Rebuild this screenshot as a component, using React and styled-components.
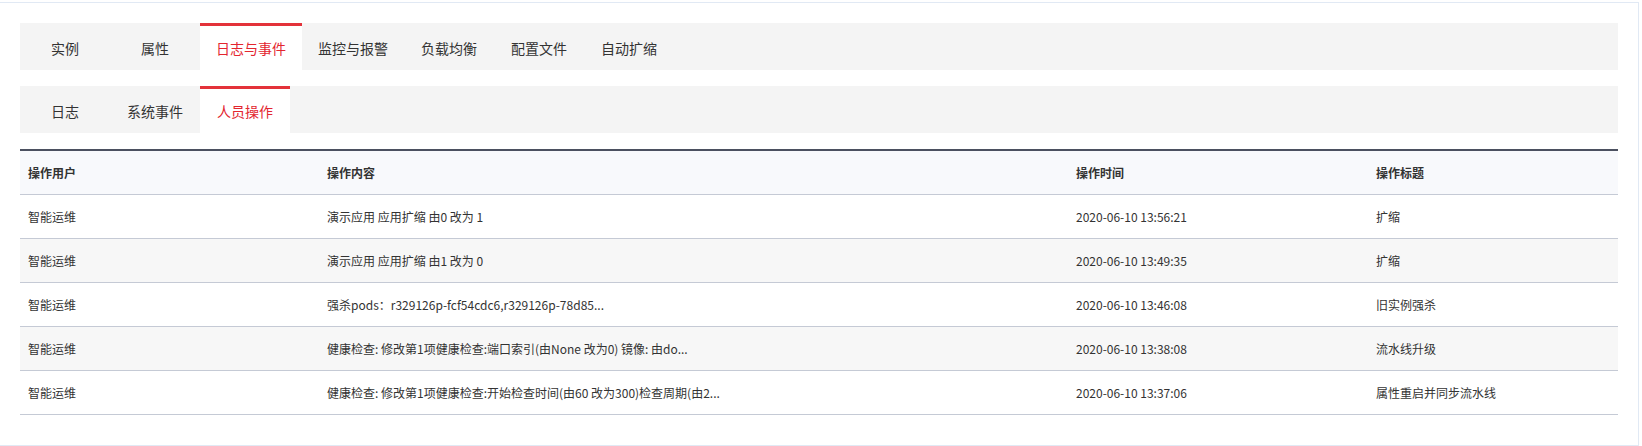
import styled, { createGlobalStyle } from "styled-components";

const GlobalStyle = createGlobalStyle`
  body {
    margin: 0;
    background: #fff;
    font-family: "Noto Sans CJK SC", "Noto Sans", "Liberation Sans", sans-serif;
    color: #333;
  }
`;

const Panel = styled.div`
  margin: 2px 3px 0 -1px;
  padding: 20px 20px 30px 20px;
  border: 1px solid #e1e9f4;
  background: #fff;
`;

const TabBar = styled.div`
  display: flex;
  height: 47px;
  background: #f4f4f4;
  margin-bottom: 16px;
`;

const Tab = styled.div`
  min-width: 90px;
  box-sizing: border-box;
  padding: 0 16px;
  display: flex;
  align-items: center;
  justify-content: center;
  font-size: 14px;
  cursor: pointer;
  color: ${({ $active }) => ($active ? "#e3262f" : "#333")};
  background: ${({ $active }) => ($active ? "#fff" : "transparent")};
  border-top: 3px solid ${({ $active }) => ($active ? "#e3323a" : "transparent")};
  border-bottom: 1px solid transparent;
`;

const Table = styled.table`
  width: 100%;
  border-collapse: collapse;
  table-layout: fixed;
  font-size: 12px;
  border-top: 2px solid #4b5060;
`;

const HeadCell = styled.th`
  height: 43px;
  padding: 0 8px;
  text-align: left;
  font-weight: bold;
  color: #333;
  background: #f8f9fc;
  border-bottom: 1px solid #c5cad5;
`;

const Row = styled.tr`
  background: ${({ $odd }) => ($odd ? "#f7f7f7" : "#fff")};
`;

const Cell = styled.td`
  height: 43px;
  padding: 0 8px;
  color: #333;
  border-bottom: 1px solid #c5cad5;
  white-space: nowrap;
  overflow: hidden;
`;

const mainTabs = ["实例", "属性", "日志与事件", "监控与报警", "负载均衡", "配置文件", "自动扩缩"];
const subTabs = ["日志", "系统事件", "人员操作"];

const rows = [
  ["智能运维", "演示应用 应用扩缩 由0 改为 1", "2020-06-10 13:56:21", "扩缩"],
  ["智能运维", "演示应用 应用扩缩 由1 改为 0", "2020-06-10 13:49:35", "扩缩"],
  ["智能运维", "强杀pods：r329126p-fcf54cdc6,r329126p-78d85...", "2020-06-10 13:46:08", "旧实例强杀"],
  ["智能运维", "健康检查: 修改第1项健康检查:端口索引(由None 改为0) 镜像: 由do...", "2020-06-10 13:38:08", "流水线升级"],
  ["智能运维", "健康检查: 修改第1项健康检查:开始检查时间(由60 改为300)检查周期(由2...", "2020-06-10 13:37:06", "属性重启并同步流水线"],
];

export default function App() {
  return (
    <>
      <GlobalStyle />
      <Panel>
        <TabBar>
          {mainTabs.map((t) => (
            <Tab key={t} $active={t === "日志与事件"}>{t}</Tab>
          ))}
        </TabBar>
        <TabBar>
          {subTabs.map((t) => (
            <Tab key={t} $active={t === "人员操作"}>{t}</Tab>
          ))}
        </TabBar>
        <Table>
          <colgroup>
            <col style={{ width: 299 }} />
            <col style={{ width: 749 }} />
            <col style={{ width: 300 }} />
            <col />
          </colgroup>
          <thead>
            <tr>
              <HeadCell>操作用户</HeadCell>
              <HeadCell>操作内容</HeadCell>
              <HeadCell>操作时间</HeadCell>
              <HeadCell>操作标题</HeadCell>
            </tr>
          </thead>
          <tbody>
            {rows.map((r, i) => (
              <Row key={i} $odd={i % 2 === 1}>
                {r.map((c, j) => (
                  <Cell key={j}>{c}</Cell>
                ))}
              </Row>
            ))}
          </tbody>
        </Table>
      </Panel>
    </>
  );
}
